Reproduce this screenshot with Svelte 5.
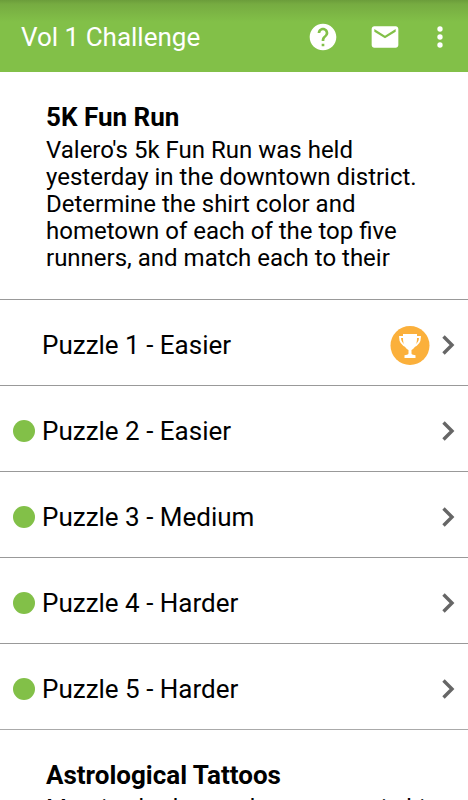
<script lang="ts">
  interface Puzzle {
    name: string;
    isNew?: boolean;
    solved?: boolean;
  }

  const puzzles: Puzzle[] = [
    { name: "Puzzle 1 - Easier", solved: true },
    { name: "Puzzle 2 - Easier", isNew: true },
    { name: "Puzzle 3 - Medium", isNew: true },
    { name: "Puzzle 4 - Harder", isNew: true },
    { name: "Puzzle 5 - Harder", isNew: true },
  ];
</script>

<div class="screen">
  <header class="bar">
    <h1>Vol 1 Challenge</h1>
    <button type="button" class="icon" aria-label="Help">
      <svg viewBox="0 0 24 24" width="32" height="32">
        <path
          d="M12 2C6.48 2 2 6.48 2 12s4.48 10 10 10 10-4.48 10-10S17.52 2 12 2zm1 17h-2v-2h2v2zm2.07-7.75-.9.92C13.45 12.9 13 13.5 13 15h-2v-.5c0-1.1.45-2.1 1.17-2.83l1.24-1.26c.37-.36.59-.86.59-1.41 0-1.1-.9-2-2-2s-2 .9-2 2H8c0-2.21 1.79-4 4-4s4 1.79 4 4c0 .88-.36 1.68-.93 2.25z"
        />
      </svg>
    </button>
    <button type="button" class="icon" aria-label="Messages">
      <svg viewBox="0 0 24 24" width="32" height="32">
        <path
          d="M20 4H4c-1.1 0-2 .9-2 2v12c0 1.1.9 2 2 2h16c1.1 0 2-.9 2-2V6c0-1.1-.9-2-2-2zm0 4-8 5-8-5V6l8 5 8-5v2z"
        />
      </svg>
    </button>
    <button type="button" class="icon icon--more" aria-label="More options">
      <svg viewBox="0 0 24 24" width="32" height="32">
        <circle cx="12" cy="6" r="2" />
        <circle cx="12" cy="12" r="2" />
        <circle cx="12" cy="18" r="2" />
      </svg>
    </button>
  </header>

  <main>
    <section class="story">
      <h2>5K Fun Run</h2>
      <p>
        Valero's 5k Fun Run was held yesterday in the downtown district. Determine the shirt color
        and hometown of each of the top five runners, and match each to their
      </p>
    </section>

    <ul>
      {#each puzzles as puzzle (puzzle.name)}
        <li>
          <button type="button" class="row">
            <span class="status">
              {#if puzzle.isNew}<span class="dot"></span>{/if}
            </span>
            <span class="name">{puzzle.name}</span>
            {#if puzzle.solved}
              <svg class="trophy" viewBox="0 0 40 40" width="40" height="40">
                <circle cx="20" cy="20.5" r="19.5" fill="#fbb03b" />
                <path
                  d="M13 9h14v4c0 6-2 10-5.500 12v3.500q0 1 1.500 1.300l2.500.5V33H14.500v-2.700l2.500-.5q1.500-.3 1.500-1.300V25c-3.500-2-5.500-6-5.500-12z"
                  fill="#fff"
                />
                <path
                  d="M13.500 12H10q0 7 6.500 9.500M26.500 12H30q0 7-6.500 9.500"
                  fill="none"
                  stroke="#fff"
                  stroke-width="1.8"
                />
              </svg>
            {/if}
            <svg class="chevron" viewBox="0 0 14 20" width="14" height="20">
              <path d="M2.500 1.500l8.500 8.500-8.500 8.500" />
            </svg>
          </button>
        </li>
      {/each}
    </ul>

    <section class="story">
      <h2>Astrological Tattoos</h2>
      <p>Maurice had served customers in his</p>
    </section>
  </main>
</div>

<style>
  :global(body) {
    margin: 0;
    background: #fff;
  }

  .screen {
    height: 100vh;
    display: flex;
    flex-direction: column;
    overflow: hidden;
    font-family: Roboto, "Liberation Sans", sans-serif;
    color: #000;
  }

  .bar {
    flex: none;
    display: flex;
    align-items: center;
    box-sizing: border-box;
    height: 72px;
    padding: 1px 12px 0 21px;
    background: linear-gradient(#6b9d3b, #76ab41 4px, #82c048 22px);
    color: #fff;
  }

  h1 {
    flex: 1;
    margin: 0;
    font-size: 26px;
    font-weight: 400;
    line-height: 32px;
  }

  button {
    border: 0;
    padding: 0;
    background: none;
    font: inherit;
    color: inherit;
    cursor: pointer;
  }

  .icon {
    display: flex;
    margin-left: 30px;
    fill: #fff;
  }

  .icon--more {
    margin-left: 23px;
  }

  main {
    flex: 1;
    min-height: 0;
    overflow: hidden;
  }

  .story {
    padding: 29px 30px 27px 46px;
  }

  h2 {
    margin: 0;
    font-size: 26px;
    font-weight: 700;
    line-height: 32px;
  }

  p {
    margin: 4px 0 0;
    font-size: 24px;
    line-height: 27px;
  }

  ul {
    margin: 0;
    padding: 0;
    list-style: none;
    border-bottom: 1px solid #aaa;
  }

  li {
    border-top: 1px solid #999;
  }

  .row {
    display: flex;
    align-items: center;
    width: 100%;
    height: 85px;
    padding: 5px 13px 0 13px;
    text-align: left;
  }

  .status {
    flex: none;
    width: 29px;
  }

  .dot {
    display: block;
    width: 22px;
    height: 22px;
    border-radius: 50%;
    background: #82c048;
  }

  .name {
    flex: 1;
    font-size: 26px;
    line-height: 32px;
  }

  .trophy {
    margin-right: 11px;
  }

  .chevron {
    fill: none;
    stroke: #666;
    stroke-width: 3.4;
  }
</style>
